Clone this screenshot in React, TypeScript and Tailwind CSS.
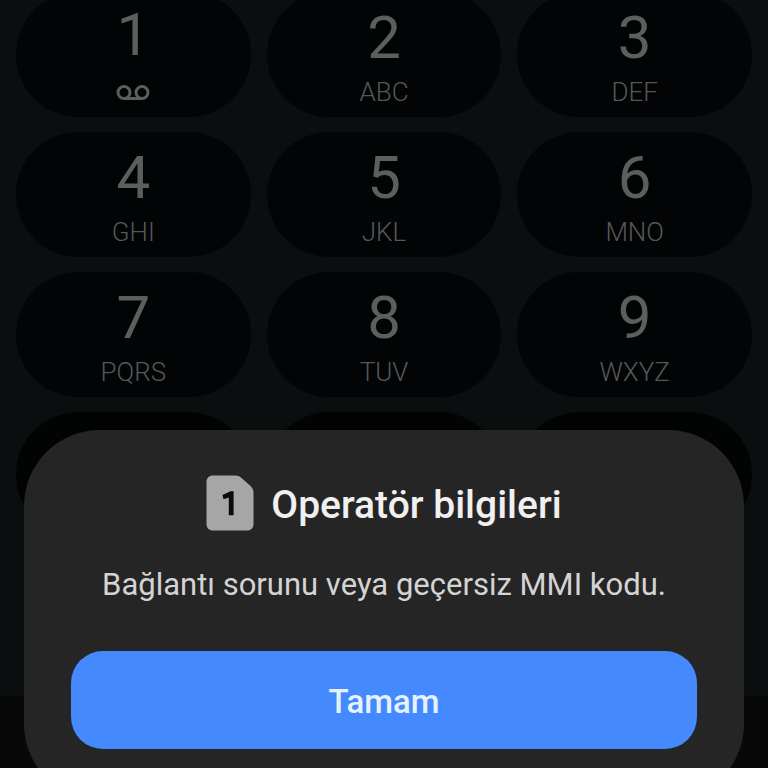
type Key = { digit: string; letters?: string };

const keys: Key[] = [
  { digit: "1" },
  { digit: "2", letters: "ABC" },
  { digit: "3", letters: "DEF" },
  { digit: "4", letters: "GHI" },
  { digit: "5", letters: "JKL" },
  { digit: "6", letters: "MNO" },
  { digit: "7", letters: "PQRS" },
  { digit: "8", letters: "TUV" },
  { digit: "9", letters: "WXYZ" },
];

const bottomKeys = ["Star", "Zero", "Pound"];

function VoicemailIcon() {
  return (
    <svg viewBox="0 0 34 18" className="h-[18px] w-[34px]" fill="none" stroke="currentColor" strokeWidth="3" aria-hidden="true">
      <circle cx="8" cy="8.500" r="6" />
      <circle cx="26" cy="8.500" r="6" />
      <path d="M8 14.500h18" />
    </svg>
  );
}

function SimIcon() {
  return (
    <svg viewBox="0 0 48 56" className="h-14 w-12" aria-hidden="true">
      <path
        d="M7 0.500H29C31.500 0.500 33.500 1.300 35.300 2.800L44.500 11C46.500 12.800 47.500 15 47.500 17.500V49C47.500 53 45 55.500 41 55.500H7C3 55.500 0.500 53 0.500 49V7C0.500 3 3 0.500 7 0.500Z"
        fill="#a6a6a6"
      />
      <path d="M16.500 20L24.500 16.200H27.600V40.200H22.800V22.400L17.500 24.200Z" fill="#0b0b0b" />
    </svg>
  );
}

function KeyButton({ digit, letters }: Key) {
  return (
    <button
      type="button"
      aria-label={letters ? undefined : "1, voicemail"}
      className={`flex h-[125px] flex-col items-center rounded-full bg-[#020405] text-[#5d5f5f] ${letters ? "pt-3" : "pt-[9px]"}`}
    >
      <span className="text-[60px] leading-[68px]">{digit}</span>
      {letters ? (
        <span className="text-[26px] leading-10 font-light text-[#565858]">{letters}</span>
      ) : (
        <span className="flex h-12 items-center">
          <VoicemailIcon />
        </span>
      )}
    </button>
  );
}

export default function App() {
  return (
    <div className="flex h-screen flex-col overflow-hidden bg-[#0b0e0f] font-['Roboto',sans-serif]">
      <main className="min-h-0 flex-1 overflow-hidden px-4">
        <div className="-mt-2 grid grid-cols-3 gap-x-4 gap-y-[15px]">
          {keys.map((key) => (
            <KeyButton key={key.digit} {...key} />
          ))}
          {bottomKeys.map((name) => (
            <button key={name} type="button" aria-label={name} className="h-[125px] rounded-full bg-[#020404]" />
          ))}
        </div>
      </main>
      <footer className="h-[72px] shrink-0 bg-[#080808]" />

      <div className="fixed inset-0 flex items-end overflow-hidden px-6">
        <section
          role="dialog"
          aria-modal="true"
          aria-labelledby="dialog-title"
          className="-mb-8 flex w-full flex-col rounded-[76px] bg-[#252525] px-[47px] pt-[45px] pb-[51px]"
        >
          <header className="flex justify-center gap-[17px]">
            <SimIcon />
            <h1 id="dialog-title" className="text-[39px] leading-[60px] font-medium text-[#f0f0f0]">
              Operatör bilgileri
            </h1>
          </header>
          <p className="mt-[30px] text-center text-[31px] leading-10 text-[#d4d4d4]">
            Bağlantı sorunu veya geçersiz MMI kodu.
          </p>
          <button
            type="button"
            className="mt-[46px] h-[98px] w-full rounded-[32px] bg-[#4589ff] pt-[3px] text-[33px] font-medium text-[#e6f2ff]"
          >
            Tamam
          </button>
        </section>
      </div>
    </div>
  );
}
